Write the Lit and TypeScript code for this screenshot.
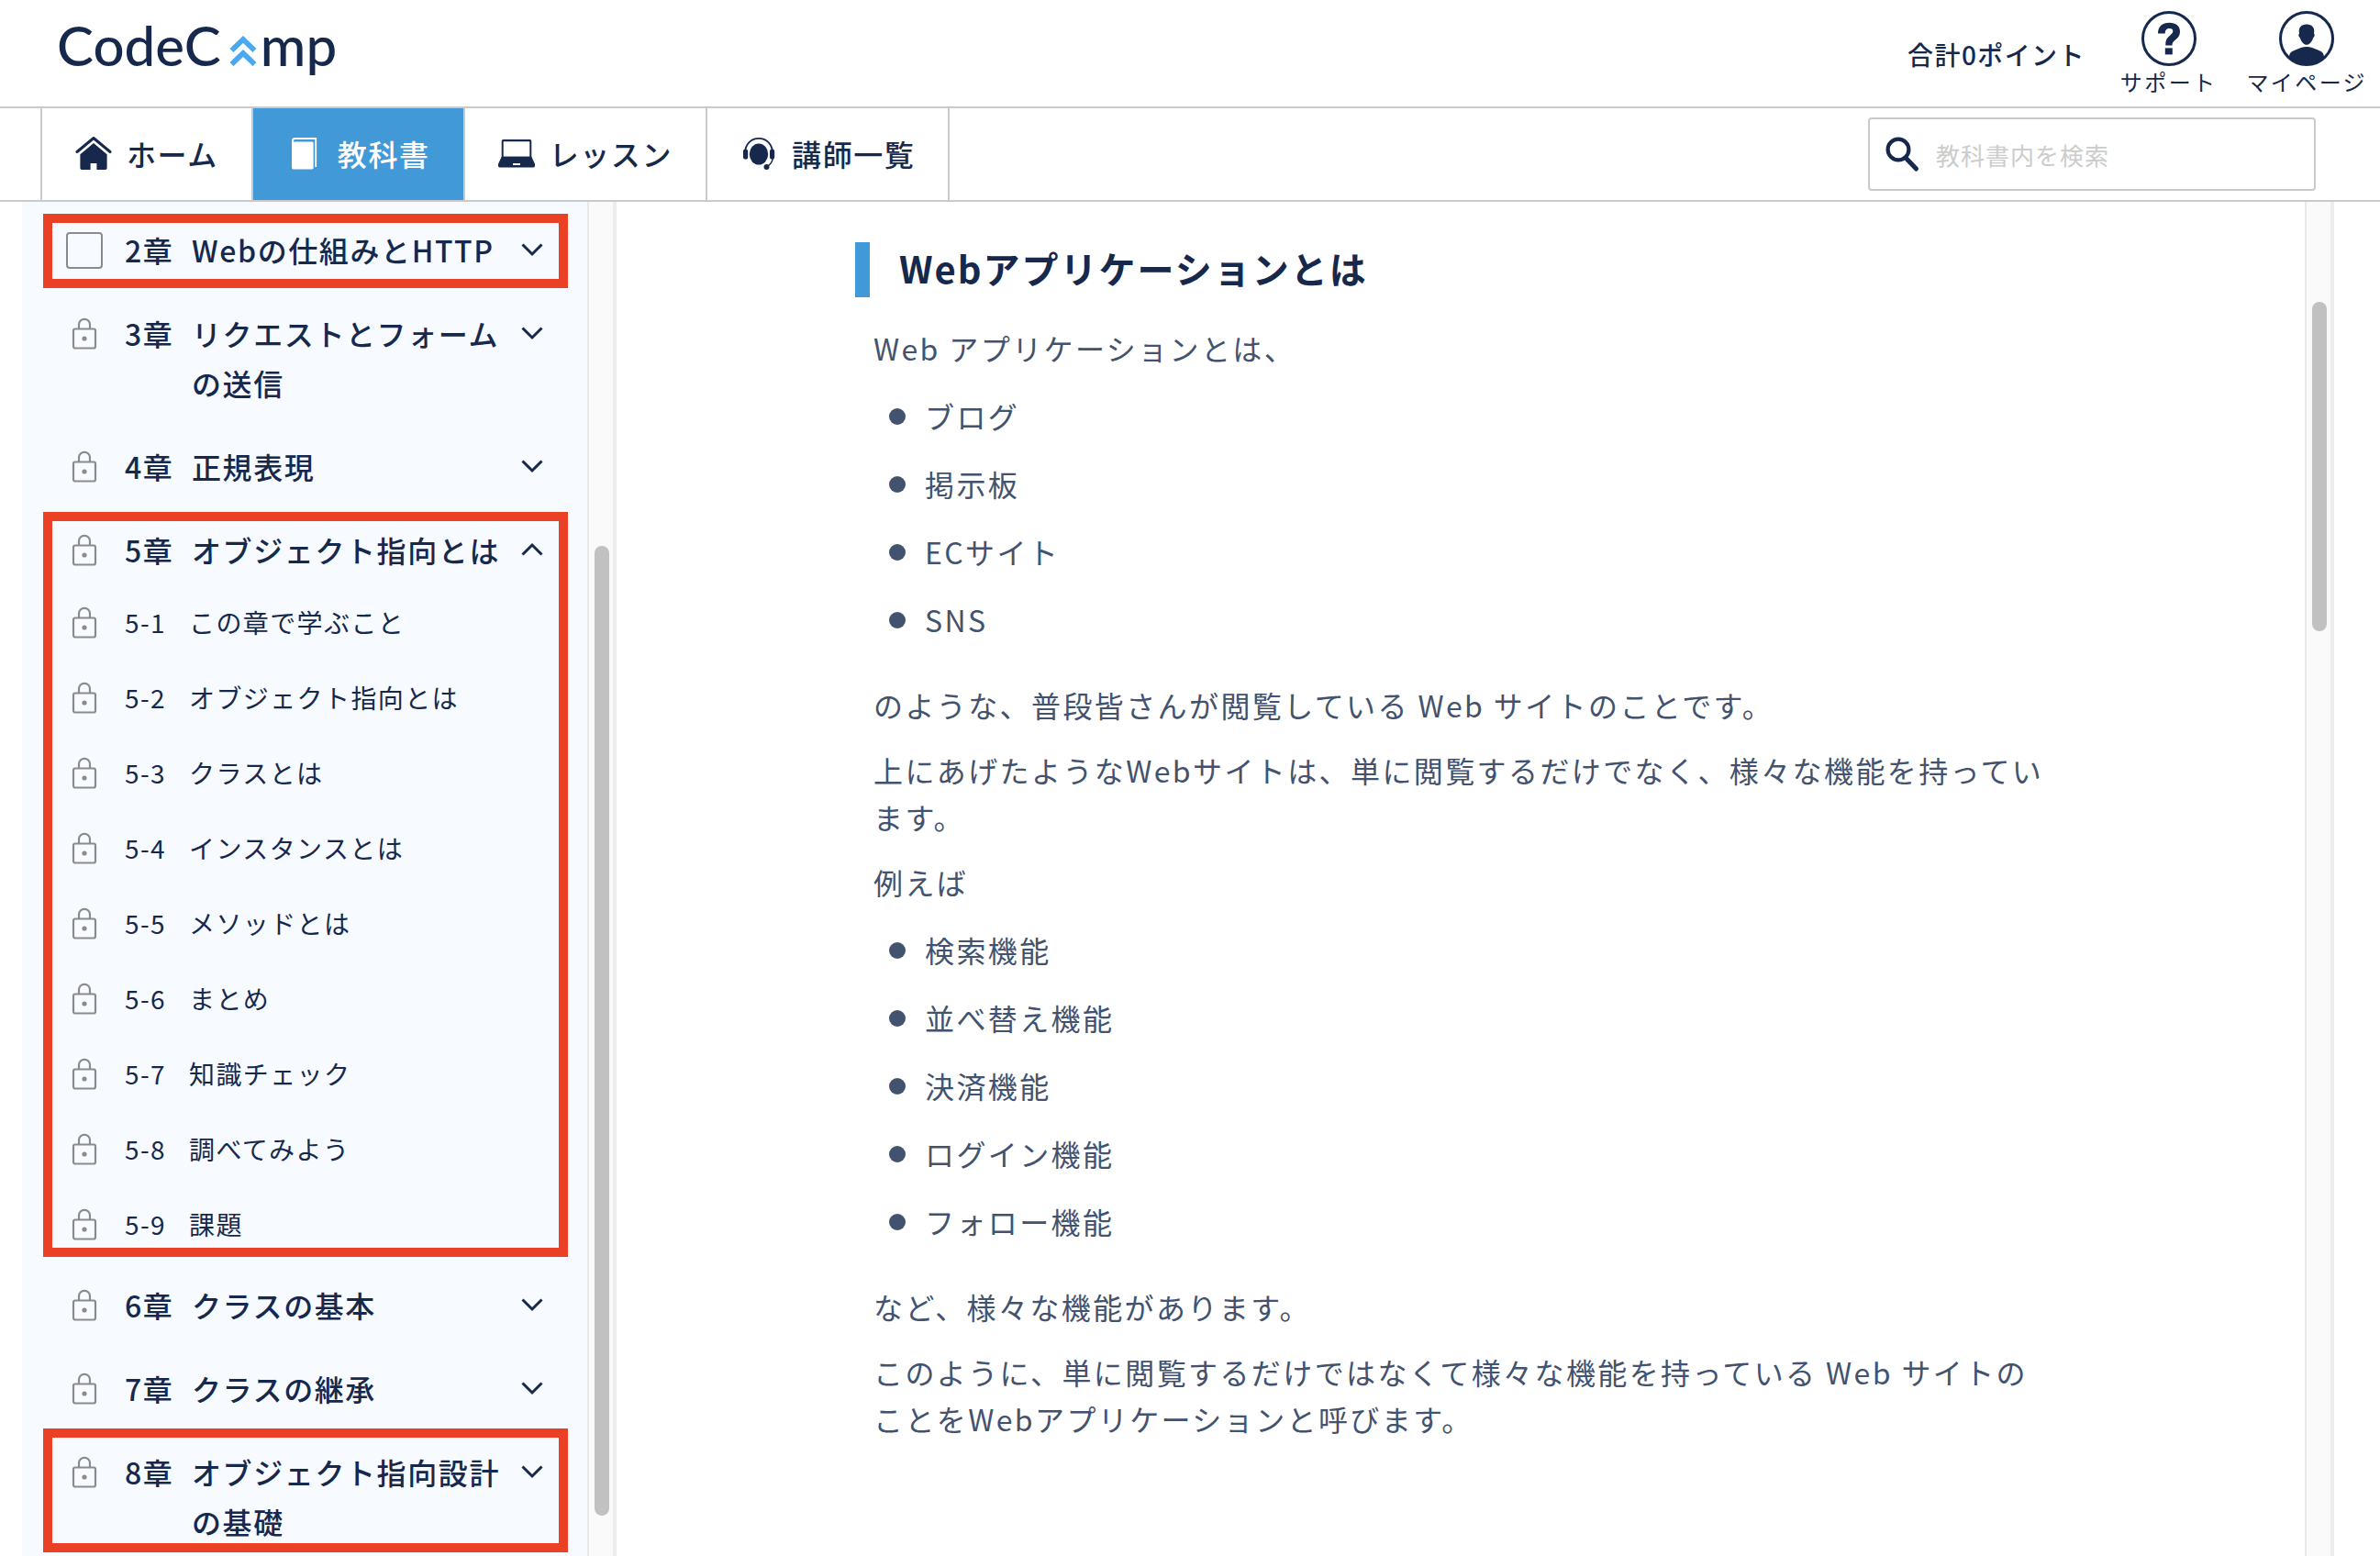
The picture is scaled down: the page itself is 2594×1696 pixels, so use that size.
import { LitElement, html, svg, css, nothing } from "lit";
import { customElement, property } from "lit/decorators.js";
import { classMap } from "lit/directives/class-map.js";

interface Lesson {
  no: string;
  title: string;
}

interface Chapter {
  no: string;
  title: string;
  unlocked?: boolean;
  open?: boolean;
  mark?: "single" | "group" | "last";
  lessons?: Lesson[];
}

const chapters: Chapter[] = [
  { no: "2章", title: "Webの仕組みとHTTP", unlocked: true, mark: "single" },
  { no: "3章", title: "リクエストとフォームの送信" },
  { no: "4章", title: "正規表現" },
  {
    no: "5章",
    title: "オブジェクト指向とは",
    open: true,
    mark: "group",
    lessons: [
      { no: "5-1", title: "この章で学ぶこと" },
      { no: "5-2", title: "オブジェクト指向とは" },
      { no: "5-3", title: "クラスとは" },
      { no: "5-4", title: "インスタンスとは" },
      { no: "5-5", title: "メソッドとは" },
      { no: "5-6", title: "まとめ" },
      { no: "5-7", title: "知識チェック" },
      { no: "5-8", title: "調べてみよう" },
      { no: "5-9", title: "課題" },
    ],
  },
  { no: "6章", title: "クラスの基本" },
  { no: "7章", title: "クラスの継承" },
  { no: "8章", title: "オブジェクト指向設計の基礎", mark: "last" },
];

const homeIcon = svg`
  <svg width="40" height="38" viewBox="0 0 40 38" aria-hidden="true">
    <path d="M2 17.500 20 2.500l18 15" fill="none" stroke="currentColor" stroke-width="3" stroke-linecap="round" stroke-linejoin="round"/>
    <path d="M20 8 34.600 20.200v15a1.800 1.800 0 0 1-1.800 1.800h-9.400v-7h-6.800v7H7.200a1.800 1.800 0 0 1-1.800-1.800v-15z" fill="currentColor"/>
  </svg>`;

const bookIcon = svg`
  <svg width="40" height="38" viewBox="0 0 40 38" aria-hidden="true">
    <path d="M6.400 6.600h21.800a1.400 1.400 0 0 1 1.400 1.400v27a1.400 1.400 0 0 1-1.400 1.400H7.600A1.600 1.600 0 0 1 6 34.800V6.600z" fill="currentColor"/>
    <path d="M7 7.500V5.400a2.400 2.400 0 0 1 2.400-2.400h22.800v31" fill="none" stroke="currentColor" stroke-width="1.800"/>
  </svg>`;

const laptopIcon = svg`
  <svg width="40" height="38" viewBox="0 0 40 38" aria-hidden="true">
    <path d="M5.500 4h29a1.800 1.800 0 0 1 1.800 1.800V24H3.700V5.800A1.800 1.800 0 0 1 5.500 4zM5.700 6.200V22.800h28.600V6.200z" fill="currentColor" fill-rule="evenodd"/>
    <path d="M3.700 22.800h32.600l3.700 8v2a1.600 1.600 0 0 1-1.600 1.600H1.600A1.600 1.600 0 0 1 0 32.800v-2zM16 30v2h8v-2z" fill="currentColor" fill-rule="evenodd"/>
  </svg>`;

const headsetIcon = svg`
  <svg width="40" height="38" viewBox="0 0 40 38" aria-hidden="true">
    <ellipse cx="20" cy="20" rx="10.200" ry="11.600" fill="currentColor"/>
    <path d="M5 18C5.500 9 11.500 2.800 20 2.800S34.500 9 35 18" fill="none" stroke="currentColor" stroke-width="1.800"/>
    <rect x="3" y="14.500" width="5.200" height="11" rx="2.600" fill="currentColor"/>
    <rect x="32" y="14.500" width="5.200" height="11" rx="2.600" fill="currentColor"/>
    <path d="M35 25c0 4.500-3.500 6.500-6 9" fill="none" stroke="currentColor" stroke-width="1.500"/>
    <circle cx="28.500" cy="34" r="3" fill="currentColor"/>
  </svg>`;

const searchIcon = svg`
  <svg width="40" height="40" viewBox="0 0 40 40" aria-hidden="true">
    <circle cx="15" cy="15" r="11.400" fill="none" stroke="currentColor" stroke-width="4.200"/>
    <path d="m23.500 24.500 11 11.500" stroke="currentColor" stroke-width="5" stroke-linecap="round"/>
  </svg>`;

const helpIcon = svg`
  <svg width="60" height="60" viewBox="0 0 60 60" aria-hidden="true">
    <circle cx="30" cy="30" r="28.500" fill="none" stroke="currentColor" stroke-width="3"/>
    <path d="M18 24.500C18 17 22.500 12.800 30.500 12.800c7 0 11.500 3.600 11.500 9.600 0 4-1.800 6.200-4.800 8.800-2.600 2.200-3.700 3.200-3.700 6.200H26.300c0-6 1.400-7.800 4.400-10.400 2.200-2 3.600-3 3.600-4.900 0-2-1.300-3.200-3.800-3.200-3.200 0-4.700 1.800-4.700 5.600z" fill="currentColor"/>
    <rect x="25.800" y="40.400" width="8" height="7" fill="currentColor"/>
  </svg>`;

const userIcon = svg`
  <svg width="60" height="60" viewBox="0 0 60 60" aria-hidden="true">
    <circle cx="30" cy="30" r="28.500" fill="none" stroke="currentColor" stroke-width="3"/>
    <path d="M30 14.500c6 0 8.600 3.500 8.200 8.500l-.2 1.400c1.200.8.800 3.800-.8 4.600-1 4.200-4.200 7.800-7.200 7.800s-6.200-3.600-7.200-7.800c-1.600-.8-2-3.800-.8-4.600l-.2-1.400c-.4-5 2.200-8.500 8.200-8.500z" fill="currentColor"/>
    <path d="M11 50.500c.2-5 2.200-6.200 6.600-8 4.400-1.700 8.200-3.500 12.400-3.500s8 1.800 12.400 3.500c4.400 1.800 6.400 3 6.600 8C44 56 37.500 59 30 59s-14-3-19-8.500z" fill="currentColor"/>
  </svg>`;

const lockIcon = svg`
  <svg width="28" height="36" viewBox="0 0 28 36" aria-hidden="true">
    <rect x="2" y="12.500" width="24" height="21" rx="2" fill="none" stroke="#8b8b8b" stroke-width="2.200"/>
    <path d="M8 12.500V7.800a6 6 0 0 1 12 0v4.700" fill="none" stroke="#8b8b8b" stroke-width="2.200"/>
    <circle cx="14" cy="23" r="2.600" fill="#8b8b8b"/>
  </svg>`;

const markIcon = svg`
  <svg width="30" height="34" viewBox="0 0 30 34" aria-hidden="true">
    <path d="M2.500 17 15 5l12.500 12M2.500 32 15 20l12.500 12" fill="none" stroke="#4aa8f0" stroke-width="5.800"/>
  </svg>`;

const chevron = (up: boolean) => svg`
  <svg width="24" height="16" viewBox="0 0 24 16" aria-hidden="true">
    <path d=${up ? "M1.500 13.500 12 3l10.500 10.500" : "M1.500 2.500 12 13 22.500 2.500"} fill="none" stroke="currentColor" stroke-width="3"/>
  </svg>`;

@customElement("site-header")
export class SiteHeader extends LitElement {
  static styles = css`
    :host {
      display: block;
      color: #16294d;
    }
    .top {
      display: flex;
      align-items: flex-start;
      justify-content: space-between;
      height: 104px;
      padding: 12px 14px 0 62px;
      border-bottom: 2px solid #cacaca;
    }
    a {
      color: inherit;
      text-decoration: none;
    }
    .logo {
      display: flex;
      align-items: baseline;
      font: 500 60px/74px Lato, "Liberation Sans", sans-serif;
      letter-spacing: normal;
    }
    .logo svg {
      margin: 0 4px 0 9px;
    }
    .tools {
      display: flex;
      gap: 32px;
    }
    .points {
      margin-right: 6px;
      font-size: 28px;
      line-height: 94px;
      font-weight: 500;
      letter-spacing: 0.05em;
    }
    .tool {
      display: flex;
      flex-direction: column;
      align-items: center;
      font-size: 24px;
      line-height: 34px;
      letter-spacing: 0.1em;
    }
    .tool svg {
      display: block;
    }
    .bar {
      display: flex;
      justify-content: space-between;
      align-items: center;
      padding: 0 70px 0 44px;
      border-bottom: 2px solid #cacaca;
    }
    .tabs {
      display: flex;
      border-left: 2px solid #cacaca;
    }
    .tab {
      display: flex;
      align-items: center;
      gap: 16px;
      padding: 0 36px 2px;
      border-right: 2px solid #cacaca;
      font-size: 32px;
      line-height: 98px;
      font-weight: 500;
      letter-spacing: 0.05em;
    }
    .tab.active {
      background: #4299d8;
      color: #fff;
    }
    .search {
      display: flex;
      align-items: center;
      gap: 16px;
      width: 488px;
      height: 80px;
      box-sizing: border-box;
      padding: 0 16px;
      border: 2px solid #cacaca;
      border-radius: 4px;
    }
    .search label {
      display: flex;
    }
    .search input {
      flex: 1;
      min-width: 0;
      border: 0;
      padding: 0;
      outline: 0;
      background: none;
      color: inherit;
      font: inherit;
      font-size: 26px;
      letter-spacing: 1px;
    }
    .search input::placeholder {
      color: #cccccc;
      opacity: 1;
    }
  `;

  render() {
    const tabs = [
      { label: "ホーム", icon: homeIcon },
      { label: "教科書", icon: bookIcon, active: true },
      { label: "レッスン", icon: laptopIcon },
      { label: "講師一覧", icon: headsetIcon },
    ];
    return html`
      <header>
        <div class="top">
          <a class="logo" href="#home"><span>CodeC</span>${markIcon}<span>mp</span></a>
          <div class="tools">
            <span class="points">合計0ポイント</span>
            <a class="tool" href="#support">${helpIcon}<span>サポート</span></a>
            <a class="tool" href="#mypage">${userIcon}<span>マイページ</span></a>
          </div>
        </div>
        <div class="bar">
          <nav class="tabs">
            ${tabs.map(
              (t) => html`<a class=${classMap({ tab: true, active: !!t.active })} href="#tab">${t.icon}<span>${t.label}</span></a>`
            )}
          </nav>
          <form class="search" role="search">
            <label for="q" aria-label="教科書内を検索">${searchIcon}</label>
            <input id="q" type="text" placeholder="教科書内を検索" />
          </form>
        </div>
      </header>
    `;
  }
}

@customElement("chapter-item")
export class ChapterItem extends LitElement {
  @property({ attribute: false }) chapter!: Chapter;

  static styles = css`
    :host {
      display: block;
      color: #16294d;
    }
    .chapter {
      position: relative;
    }
    .row,
    .lesson {
      display: grid;
      align-items: start;
      padding: 17px 48px 20px;
      letter-spacing: 0.05em;
    }
    .row {
      grid-template-columns: 40px 97px 1fr 24px;
      font-size: 32px;
      line-height: 54px;
      font-weight: 500;
    }
    .icon {
      display: flex;
      align-items: center;
      justify-content: center;
      height: 56px;
      margin-bottom: -2px;
    }
    .no {
      padding-left: 24px;
    }
    .check {
      appearance: none;
      width: 40px;
      height: 40px;
      margin: 0;
      border: 2px solid #8b8b8b;
      border-radius: 4px;
    }
    .toggle {
      display: flex;
      align-items: center;
      justify-content: center;
      height: 54px;
      padding: 0;
      border: 0;
      background: none;
      color: inherit;
    }
    .title {
      padding-right: 10px;
    }
    .lessons {
      list-style: none;
      margin: 0;
      padding: 0 0 2px;
    }
    .group .row {
      padding-bottom: 12px;
    }
    .lesson {
      grid-template-columns: 40px 94px 1fr;
      padding: 17px 48px 19px;
      font-size: 28px;
      line-height: 46px;
    }
    .lesson .icon {
      height: 48px;
    }
    .lesson a {
      color: inherit;
      text-decoration: none;
    }
    .mark {
      position: absolute;
      left: 23px;
      right: 21px;
      border: 10px solid #ea4026;
      pointer-events: none;
    }
    .single .mark {
      top: 5px;
      bottom: 5px;
    }
    .group .mark {
      top: 3px;
      bottom: 8px;
    }
    .last .mark {
      top: -3px;
      bottom: 13px;
    }
  `;

  render() {
    const c = this.chapter;
    return html`
      <section class="chapter ${c.mark ?? ""}">
        <div class="row">
          <span class="icon">
            ${c.unlocked ? html`<input class="check" type="checkbox" aria-label=${c.title} />` : lockIcon}
          </span>
          <span class="no">${c.no}</span>
          <span class="title">${c.title}</span>
          <button class="toggle" type="button" aria-label=${c.title} aria-expanded=${c.open ? "true" : "false"}>
            ${chevron(!!c.open)}
          </button>
        </div>
        ${c.lessons
          ? html`<ul class="lessons">
              ${c.lessons.map(
                (l) => html`<li class="lesson">
                  <span class="icon">${lockIcon}</span>
                  <span class="no">${l.no}</span>
                  <a href="#lesson">${l.title}</a>
                </li>`
              )}
            </ul>`
          : nothing}
        ${c.mark ? html`<div class="mark"></div>` : nothing}
      </section>
    `;
  }
}

@customElement("scroll-track")
export class ScrollTrack extends LitElement {
  @property({ type: Number }) start = 0;
  @property({ type: Number }) size = 50;

  static styles = css`
    :host {
      display: block;
      box-sizing: border-box;
      width: 32px;
      padding: 0 4px 0 6px;
      border-left: 2px solid #e8e8e8;
      border-right: 4px solid #ececec;
      background: #fafafa;
    }
    .rail {
      height: 100%;
      position: relative;
    }
    .thumb {
      position: absolute;
      left: 0;
      width: 16px;
      border-radius: 8px;
      background: #c1c1c1;
    }
  `;

  render() {
    return html`<div class="rail">
      <div class="thumb" style="top:${this.start}%;height:${this.size}%"></div>
    </div>`;
  }
}

@customElement("textbook-article")
export class TextbookArticle extends LitElement {
  static styles = css`
    :host {
      display: block;
      max-width: 1320px;
      margin: 0 auto;
      padding: 44px 0;
      color: #43536f;
      font-size: 32px;
      line-height: 51px;
      letter-spacing: 0.075em;
    }
    h2 {
      margin: 0 0 30px;
      padding: 0 0 4px 32px;
      border-left: 16px solid #4299d8;
      color: #16294d;
      font-size: 40px;
      line-height: 56px;
      font-weight: 700;
      letter-spacing: 0.05em;
    }
    p {
      margin: 0 20px 20px;
    }
    ul {
      list-style: none;
      margin: 0 20px 42px;
      padding: 3px 0 0;
      display: grid;
      gap: 23px;
    }
    li {
      display: flex;
      align-items: center;
      gap: 21px;
      padding-left: 17px;
    }
    li::before {
      content: "";
      width: 18px;
      height: 18px;
      border-radius: 50%;
      background: #43536f;
    }
  `;

  render() {
    const list = (items: string[]) => html`<ul>
      ${items.map((i) => html`<li>${i}</li>`)}
    </ul>`;
    return html`
      <article>
        <h2>Webアプリケーションとは</h2>
        <p>Web アプリケーションとは、</p>
        ${list(["ブログ", "掲示板", "ECサイト", "SNS"])}
        <p>のような、普段皆さんが閲覧している Web サイトのことです。</p>
        <p>上にあげたようなWebサイトは、単に閲覧するだけでなく、様々な機能を持っています。</p>
        <p>例えば</p>
        ${list(["検索機能", "並べ替え機能", "決済機能", "ログイン機能", "フォロー機能"])}
        <p>など、様々な機能があります。</p>
        <p>このように、単に閲覧するだけではなくて様々な機能を持っている Web サイトのことをWebアプリケーションと呼びます。</p>
      </article>
    `;
  }
}

@customElement("app-root")
export class AppRoot extends LitElement {
  static styles = css`
    :host {
      display: flex;
      flex-direction: column;
      height: 100vh;
      overflow: hidden;
      background: #fff;
      font-family: "Noto Sans CJK JP", sans-serif;
    }
    .body {
      flex: 1;
      min-height: 0;
      display: grid;
      grid-template-columns: 616px auto 1fr auto;
      padding: 0 50px 0 24px;
    }
    .side {
      padding-top: 8px;
      overflow: hidden;
      background: #f7fbff;
    }
    .main {
      overflow: hidden;
    }
  `;

  render() {
    return html`
      <site-header></site-header>
      <div class="body">
        <aside class="side">${chapters.map((c) => html`<chapter-item .chapter=${c}></chapter-item>`)}</aside>
        <scroll-track .start=${25.4} .size=${71.6}></scroll-track>
        <main class="main"><textbook-article></textbook-article></main>
        <scroll-track .start=${7.4} .size=${24.3}></scroll-track>
      </div>
    `;
  }
}
